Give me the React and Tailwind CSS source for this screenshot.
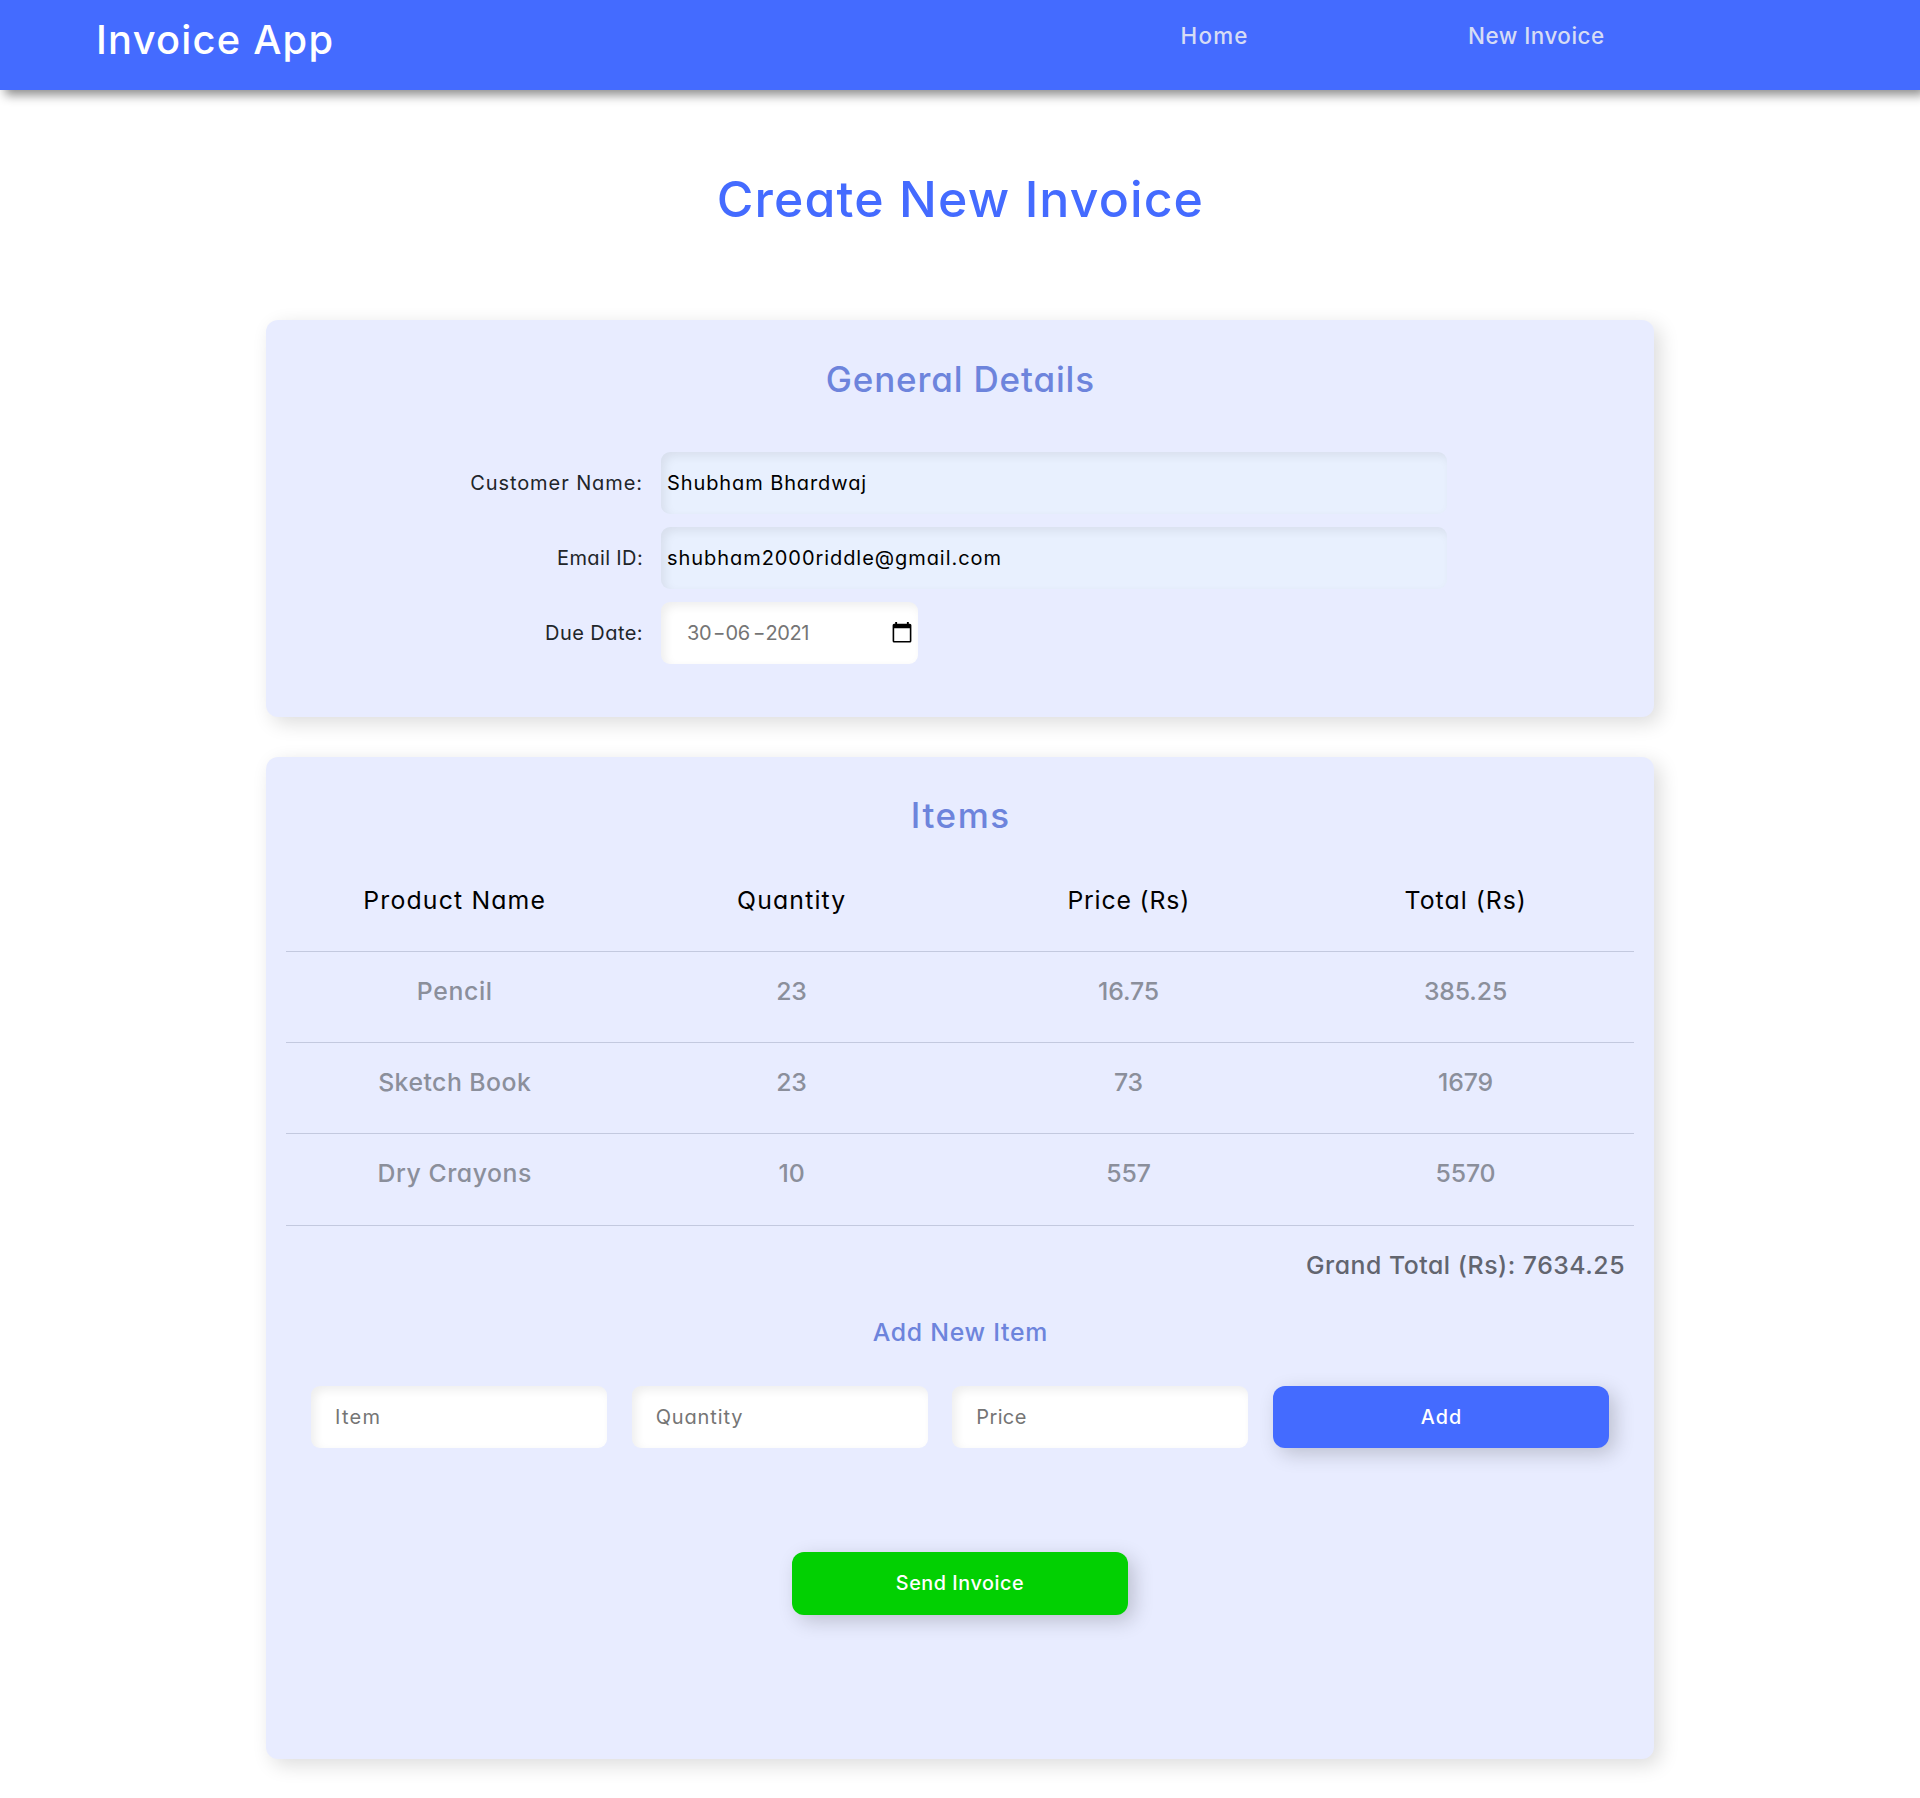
const HEADERS = [
  ["Product Name", "tracking-[0.047em]"],
  ["Quantity", "tracking-[0.047em]"],
  ["Price (Rs)", "tracking-[0.034em]"],
  ["Total (Rs)", "tracking-[0.041em]"],
];

const ROWS = [
  { name: "Pencil", nameClass: "tracking-[0.025em]", cells: ["23", "16.75", "385.25"] },
  { name: "Sketch Book", nameClass: "tracking-[0.019em]", cells: ["23", "73", "1679"] },
  { name: "Dry Crayons", nameClass: "tracking-[0.022em]", cells: ["10", "557", "5570"] },
];

const INPUT =
  "h-[62px] rounded-[9px] text-[20px] outline-none shadow-[inset_4px_4px_10px_rgba(0,0,0,0.07)]";
const CARD =
  "mx-auto w-[1388px] rounded-[12px] bg-[#e8ecff] px-5 shadow-[6px_6px_20px_rgba(0,0,0,0.14)]";
const BUTTON =
  "w-[336px] rounded-[12px] text-[19.8px] font-medium text-white shadow-[6px_6px_20px_rgba(0,0,0,0.19)]";

function CalendarIcon() {
  return (
    <svg className="mb-px h-[21px] w-5" viewBox="0 0 20 21" fill="#000">
      <path
        fillRule="evenodd"
        d="M3.2 0h1.9v1.8h9.8V0h1.9v1.8h1.1a1.5 1.5 0 0 1 1.5 1.5v15.8a1.5 1.5 0 0 1-1.5 1.5H2.1a1.5 1.5 0 0 1-1.5-1.5V3.3a1.5 1.5 0 0 1 1.5-1.5h1.1zM2.2 6.2v12.9h15.6V6.2z"
      />
    </svg>
  );
}

function Field({ label, labelClass, children }) {
  return (
    <div className="flex h-[62px] items-center">
      <label className={`w-[375px] pr-[18px] text-right text-[20px] text-[#212529] ${labelClass}`}>
        {label}
      </label>
      {children}
    </div>
  );
}

export default function App() {
  return (
    <div className="h-[1798px] overflow-hidden bg-white font-[Inter,sans-serif] whitespace-nowrap [font-feature-settings:'cv11']">
      <header className="flex h-[90px] items-start bg-[#446bff] pl-24 shadow-[5px_5px_10px_rgba(0,0,0,0.45)]">
        <div className="text-[39.8px] leading-[79px] font-medium tracking-[0.031em] text-white">
          Invoice App
        </div>
        <nav className="ml-auto flex text-[22.4px] leading-[71px] font-medium text-[#d6dcf5]">
          <a className="w-[287.5px] tracking-[0.056em]">Home</a>
          <a className="w-[452px] tracking-[0.022em]">New Invoice</a>
        </nav>
      </header>

      <h1 className="mb-3 text-center indent-[0.018em] text-[50px] leading-[218px] font-medium tracking-[0.022em] text-[#446bff]">
        Create New Invoice
      </h1>

      <section className={`h-[397px] ${CARD}`}>
        <h2 className="mb-[14px] text-center indent-[0.02em] text-[35px] leading-[118px] font-medium tracking-[0.024em] text-[#6d84dc]">
          General Details
        </h2>
        <div className="flex flex-col gap-[13px]">
          <Field label="Customer Name:" labelClass="tracking-[0.046em]">
            <input
              defaultValue="Shubham Bhardwaj"
              className={`w-[786px] bg-[#e8f0fe] pl-[6px] tracking-[0.045em] text-black ${INPUT}`}
            />
          </Field>
          <Field label="Email ID:" labelClass="tracking-[0.018em]">
            <input
              defaultValue="shubham2000riddle@gmail.com"
              className={`w-[786px] bg-[#e8f0fe] pl-[6px] tracking-[0.047em] text-black ${INPUT}`}
            />
          </Field>
          <Field label="Due Date:" labelClass="tracking-[0.022em]">
            <div
              className={`flex w-[257px] items-center justify-between bg-white pr-[6px] pl-[26px] text-[#757575] ${INPUT}`}
            >
              <div className="flex items-center tracking-[-0.02em]">
                <span className="w-[25.5px]">30</span>
                <span className="w-[13px] origin-left scale-x-[1.35]">-</span>
                <span className="w-[27px]">06</span>
                <span className="w-[13px] origin-left scale-x-[1.35]">-</span>
                <span>2021</span>
              </div>
              <CalendarIcon />
            </div>
          </Field>
        </div>
      </section>

      <section className={`mt-10 h-[1002px] ${CARD}`}>
        <h2 className="mb-[2px] text-center indent-[0.045em] text-[35px] leading-[116px] font-medium tracking-[0.045em] text-[#6d84dc]">
          Items
        </h2>
        <div className="grid h-[77px] grid-cols-4 border-b border-[#c3c9df] text-center text-[24.8px] leading-[51px] text-black">
          {HEADERS.map(([text, tracking]) => (
            <div key={text} className={`indent-[0.02em] ${tracking}`}>
              {text}
            </div>
          ))}
        </div>
        {ROWS.map((row) => (
          <div
            key={row.name}
            className="grid h-[91px] grid-cols-4 border-b border-[#c3c9df] text-center text-[24.8px] leading-[79px] font-medium text-[#8b8f9b] nth-[5]:h-[92px]"
          >
            <div className={`indent-[0.02em] ${row.nameClass}`}>{row.name}</div>
            {row.cells.map((cell, i) => (
              <div key={i} className="tracking-[-0.005em]">
                {cell}
              </div>
            ))}
          </div>
        ))}
        <div className="pr-[9px] text-right text-[24.8px] leading-[79px] font-medium tracking-[0.021em] text-[#62656f]">
          Grand Total (Rs): 7634.25
        </div>
        <h3 className="text-center indent-[0.03em] text-[24.8px] leading-[55px] font-medium tracking-[0.029em] text-[#6d84dc]">
          Add New Item
        </h3>
        <div className="mt-[26px] ml-[25px] flex gap-[24.67px]">
          <input
            placeholder="Item"
            className={`w-[296px] bg-white pl-[24px] tracking-[0.065em] placeholder:text-[#757575] ${INPUT}`}
          />
          <input
            placeholder="Quantity"
            className={`w-[296px] bg-white pl-[24px] tracking-[0.043em] placeholder:text-[#757575] ${INPUT}`}
          />
          <input
            placeholder="Price"
            className={`w-[296px] bg-white pl-[24px] tracking-[0.018em] placeholder:text-[#757575] ${INPUT}`}
          />
          <button className={`h-[62px] bg-[#446bff] pt-px indent-[0.05em] tracking-[0.05em] ${BUTTON}`}>
            Add
          </button>
        </div>
        <div className="mt-[104px] flex justify-center">
          <button className={`h-[63px] bg-[#02d002] tracking-[0.028em] ${BUTTON}`}>Send Invoice</button>
        </div>
      </section>
    </div>
  );
}
